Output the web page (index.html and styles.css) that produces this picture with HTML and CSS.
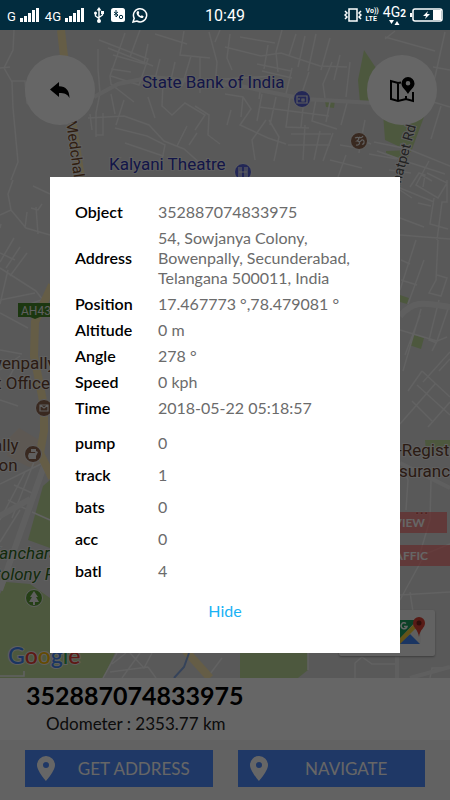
FILE: index.html
```html
<!DOCTYPE html>
<html lang="en">
<head>
<meta charset="UTF-8">
<meta name="viewport" content="width=device-width, initial-scale=1.0">
<title>Vehicle Tracking</title>
<link rel="stylesheet" href="styles.css">
</head>
<body>
<header class="status-bar">
    <div class="status-left">
        <span class="network">G</span>
        <svg class="signal" width="19" height="16" viewBox="0 0 19 16"><path d="M0 11h3v4H0zM4 9h3v6H4zM8 6h3v9H8zM12 3h3v12h-3zM16 1h3v14h-3z"/></svg>
        <span class="network">4G</span>
        <svg class="signal" width="19" height="16" viewBox="0 0 19 16"><path d="M0 11h3v4H0zM4 9h3v6H4zM8 6h3v9H8zM12 3h3v12h-3zM16 1h3v14h-3z"/></svg>
        <svg class="usb" width="10" height="16" viewBox="0 0 10 16"><path d="M5 0L2.500 3.500h5z"/><path d="M5 2v12M1.500 6v3L5 11.500M8.500 5v3L5 10.500" fill="none" stroke="#fff" stroke-width="1.400"/><circle cx="1.500" cy="6" r="1.500"/><path d="M7 4h3v3H7z"/><circle cx="5" cy="14" r="2"/></svg>
        <svg width="14" height="14" viewBox="0 0 14 14"><rect width="14" height="14" rx="2.500"/><path d="M5 2v7M3 4l4 3-2 2M7 4L3 7" fill="none" stroke="#022c3e" stroke-width="1"/><circle cx="10" cy="9" r="1.700" fill="none" stroke="#022c3e"/></svg>
        <svg class="whatsapp" width="16" height="16" viewBox="0 0 16 16"><path d="M1 15l1.200-3.700A6.600 6.600 0 1 1 4.800 14z" fill="none" stroke="#fff" stroke-width="1.500"/><path d="M5.300 4.200l1.200-.1.800 1.900-.7.900c.6 1.100 1.300 1.700 2.300 2.200l.9-.8 1.800.9c0 1.400-1.200 2-2.200 1.800C6.800 10.400 5 8.500 4.500 6.200c0-.9.300-1.600.8-2z"/></svg>
    </div>
    <time class="clock">10:49</time>
    <div class="status-right">
        <svg width="18" height="14" viewBox="0 0 18 14"><g fill="none" stroke="#fff" stroke-width="1.500"><rect x="5" y="1" width="8" height="12"/><path d="M1 3l2 2-2 2 2 2-2 2M17 3l-2 2 2 2-2 2 2 2"/></g></svg>
        <div class="volte"><span>Vo))</span><span>LTE</span></div>
        <div class="data">
            <span>4G<small>2</small></span>
            <svg width="11" height="5" viewBox="0 0 11 5"><path d="M0 0h5L2.500 4zM5.500 5h5L8 1z"/></svg>
        </div>
        <svg width="33" height="14" viewBox="0 0 33 14"><rect x="3" y="1" width="29" height="12" rx="2" fill="none" stroke="#fff" stroke-width="1.500"/><path d="M0 5h2v4H0zM23 2h8v10h-8zM18 3l-5 5h3l-1 3 5-5h-3z"/></svg>
    </div>
</header>

<main class="screen">
    <section class="map">
        <svg class="map-tiles" viewBox="0 30 450 648" preserveAspectRatio="xMidYMid slice">
            <rect y="30" width="450" height="648" fill="#dedede"/>

            <!-- parks -->
            <g fill="#c0dc9c">
                <path d="M378 71l49 17 4 10-20 54-26-12-3-40-22 3-2-23 6-30z"/>
                <path d="M325 101l5-2 5 1-1 8-8-1z"/>
                <path d="M386 151l25-1-5 12-20-9z"/>
                <path d="M400 295l9 3-2 6-7-2zM412 334l12 4-3 11-12-4z"/>
                <path d="M50 480l-7 6-15 54 22 8z"/>
                <path d="M0 594l6-12 24 2 20 14v55h65l-12 25H0z"/>
                <path d="M240 653h68v17l-10 8h-58z"/>
                <path d="M425 440h25v7h-12v6h-12z"/>
            </g>
            <path d="M7 440l12-12 25 15-5 22-10 2-22-11z" fill="#e8ddcf"/>

            <!-- streets -->
            <g fill="none" stroke="#f4f4f4" stroke-width="1.500">
                <path d="M14 30l-1 20-9 18 8 14 1 26 5 54-7 18M0 68l10-1M12 81h13l2 22 8 8"/>
                <path d="M99 40l31 12 18 7-9 26-28-9M125 33l-15 43 1 8 23 18M108 48l45 18M148 44l-4 20M113 55l32 9M111 69l20 3M98 49v20l2 24-4 20v24M96 135h7v-22M90 114l2 16M111 94l4 20"/>
                <path d="M140 30l-10 27M155 34l32 10M184 31l-4 24 30 3M160 59l-6 24M175 62l-5 22M191 56l-9 30M200 57v36M209 32l8 30-2 25M220 30l-5 12M163 83l-1 23 10 9 13-12 20 12-10 15M195 106l14 9-1 20 12 9M187 126l-10 20M197 133l-8 12"/>
                <path d="M88 118l36-2 25 9 15 16 20 8 17 15 24 6M115 128l32 8 18 9-2 10M125 143l38 13-6 10M124 100l-8 25M148 97l7 21M225 47l36 9 20-3 39 13 27 1M230 34l-3 24 5 12M240 37l35 6M282 30l-6 22 2 20M296 34l-7 22M305 36l-7 31M316 34l-8 37M330 38l-9 32M257 64l34 7M262 71l30 7M268 45l-4 24M225 79l49-3M262 79l-3 20M292 68l-6 26M309 72l-8 24M332 62l-9 22 2 14M340 55l-6 25M350 62l-4 35"/>
                <path d="M225 94l18 3 8 12-11 16 28 13 18 6M231 110l-4 15M243 97l-2 20M262 94l-5 27M276 97l-6 28M290 97l-4 30 23 1M304 99l-3 28M316 99l-4 22 25 8M330 102l-4 20M347 103l-6 22M259 107l70 9M266 120l-14 20 3 20M269 120l10 17-5 24M305 125l-2 35M320 131l-6 29M333 133l-10 28M291 134h40M288 145h42"/>
                <path d="M385 37l50 14M395 31l-10 8M445 32l-10 45-4 14M433 67l17 3M430 101l20 6M441 106l-10 33M374 142l34 7 42 17M377 151l34 12 34 11M365 120l-4 20 10 4M369 154l28 5M389 170l22 3M340 145l18 3M330 160l32 8M346 155l-8 22M361 137l-2 16"/>
                <path d="M429 161l-13 24 22 13 9-15-20-10M422 175l10 6M410 187l9-14 6 2-2 12M400 190l12 8M434 198l-4 26 18 5M434 202l-34-14M400 218l24 9M418 203l13 3M447 180v22h-5l-5 38M400 235l50 4M416 240l-16 50M438 240l-2 40-7 13 12 3 6-18-10-3M424 260l-16 44M401 260l9 4M401 280l16 5M439 300l-10 40 8 3M400 330l37 11 11-32M421 309l-18 62M447 337l-10 4-5 10M420 315l-15 40M422 371l28 26M422 371l-14 20M450 352l-27 30M417 385l33 30M439 371l11-12M400 424l35-40M412 401l20 20M450 402l-22 25"/>
                <path d="M13 180l-5 14 3 16-11 5M11 210l15 18 24 7M33 186l17 8M27 212l-2 16M36 207l2 27M31 208l7 2 4-6M0 228l1-4M14 238L0 262M20 247L6 268M0 268l36 23M27 253L10 276M15 260L0 253M36 291l16 21M8 270L0 304M35 293L0 300M24 306l26-9M0 313l28 15M0 350l22 4M17 362l-10 20M0 370l20-14M0 400l18 6"/>
                <path d="M0 484l45-22M25 472L0 520M34 462L12 518M14 485l18 8M8 500l18 9M20 510L0 542M50 520l-18-8"/>
                <path d="M404 470l4 10-2 30M431 480l-1 40-12 40M400 600l25-46 25-10M400 595l50-3M410 592l3 20-4 42M0 676h24v-5M103 678l14-25M112 664l14-11M110 672l38-5M130 653l14 15 8-15M122 678l18-25M148 667l8 11M207 678l15-20M355 678v-15l7-6 10 7h25M430 678l2-10h18M308 653v17"/>
            </g>
            <g fill="none" stroke="#eee" stroke-width="4">
                <path d="M94 97l24-13 34-7 88 9 64 13 70 4"/>
                <path d="M400 316c15-18 28-12 50-9" stroke-width="6"/>
                <path d="M44 466L0 590M0 516l30-17" stroke-width="6"/>
                <path d="M400 463l50 25M397 656v22M410 678l40-11"/>
            </g>
            <g fill="none" stroke="#fce8ae" stroke-width="8">
                <path d="M61 30l8 70 12 78M52 285l-17 37-1 34 10 50v25l-4 22 12 25"/>
                <path d="M185 650l25 28"/>
            </g>
            <path d="M174 678l10-11 5-14" fill="none" stroke="#86a7e0" stroke-width="2"/>

            <path d="M18 303h34v14H40l-5 2-5-2H18z" fill="#468a28"/>
            <text class="route" x="21" y="315">AH43</text>

            <!-- places -->
            <g class="label place">
                <text x="142" y="88">State Bank of India</text>
                <text x="109" y="170">Kalyani Theatre</text>
            </g>
            <g class="label poi">
                <text x="-31" y="369">Bowenpally</text>
                <text x="-33" y="389">Post Office</text>
                <text x="-68" y="451">Bowenpally</text>
                <text x="-36" y="471">Station</text>
                <text x="368" y="456">Sub-Registrar</text>
                <text x="385" y="477">Insurance</text>
                <text x="415" y="514">...</text>
            </g>
            <g class="label park">
                <text x="-11" y="559">Kanchara</text>
                <text x="-10" y="580">Colony Park</text>
            </g>
            <text class="label road" transform="translate(66 121) rotate(82)">Medchal Rd</text>
            <text class="label street" transform="translate(393 212) rotate(-75)">Hasmatpet Rd</text>

            <g stroke="#eee" stroke-width="1">
                <circle cx="302" cy="99" r="8.500" fill="#5763d6"/>
                <circle cx="243" cy="172" r="8.500" fill="#5763d6"/>
                <circle cx="359" cy="141" r="8.500" fill="#8f6650"/>
                <circle cx="44" cy="408" r="8.500" fill="#8f6650"/>
                <circle cx="33" cy="454" r="8.500" fill="#8f6650"/>
                <circle cx="34" cy="598" r="8.500" fill="#5c9e38"/>
            </g>
            <g fill="none" stroke="#eee" stroke-width="1.200">
                <path d="M297 96h10v7h-10zM299 98v2M302 99v2h2v-2zM239 167v10M247 167v10M241 167v10M245 167v10M239 172h8"/>
                <path d="M355 138c4-2 5 1 2 3 4 0 3 5-1 4M359 142c2 0 2-3 4-2s1 5-1 4M359 137c1 1 3 1 4-1"/>
                <path d="M40 405h8v6h-8zM40 405l4 3 4-3"/>
            </g>
            <path d="M34 591l-4 6h2l-3 5h4v3h2v-3h4l-3-5h2zM31 449h5v3h-5zM29 453h6l1-2 2 1-2 4v3h-7l-1-3z" fill="#eee"/>
            <text class="logo" x="8" y="664"><tspan fill="#4285f4">G</tspan><tspan fill="#ea4335">o</tspan><tspan fill="#fbbc05">o</tspan><tspan fill="#4285f4">g</tspan><tspan fill="#34a853">l</tspan><tspan fill="#ea4335">e</tspan></text>
        </svg>

        <button class="round-btn back" type="button" aria-label="Back">
            <svg width="20" height="16" viewBox="0 0 20 16"><path d="M0 7.500L9 0v4.300c7 0 10.500 4.500 10.500 11.700-2-3.800-5-5-10.500-5V15z"/></svg>
        </button>
        <button class="round-btn map-type" type="button" aria-label="Map type">
            <svg width="26" height="26" viewBox="0 0 26 26"><path d="M12 5.500L9 6 2 4v18l7 2 8-2 7 2v-9M9 6v18M17 19v3" fill="none" stroke="#000" stroke-width="2"/><path d="M19 0a6.500 6.500 0 0 0-6.500 6.500c0 4 4 6 6.500 10.500 2.500-4.500 6.500-6.500 6.500-10.500A6.500 6.500 0 0 0 19 0zm0 4a2.300 2.300 0 1 1 0 4.600A2.300 2.300 0 0 1 19 4z" fill-rule="evenodd"/></svg>
        </button>

        <div class="layers">
            <button class="layer-btn" type="button">STREET VIEW</button>
            <button class="layer-btn wide" type="button">TRAFFIC</button>
        </div>

        <div class="map-toolbar">
            <button type="button" aria-label="Directions"></button>
            <button type="button" aria-label="Open in Google Maps">
                <svg width="32" height="30" viewBox="0 0 32 30"><rect x="2" y="3" width="24" height="24" rx="2" fill="#eee"/><path d="M2 3h20L2 25z" fill="#1fa463"/><path d="M4 27l11-10 10 10z" fill="#4285f4"/><path d="M2 24L19 7l3 3L5 27H2z" fill="#fbd03b"/><path d="M11 6.500a3 3 0 1 0 1 3h-3" fill="none" stroke="#fff" stroke-width="1.500"/><path d="M24 0a6 6 0 0 0-6 6c0 5 5 6 6 14 1-8 6-9 6-14a6 6 0 0 0-6-6z" fill="#db4437"/><circle cx="24" cy="6" r="2.500" fill="#7b231c"/></svg>
            </button>
        </div>
    </section>

    <section class="vehicle">
        <h1>352887074833975</h1>
        <p>Odometer : 2353.77 km</p>
    </section>

    <div class="actions">
        <button class="action-btn" type="button">
            <svg width="18" height="25" viewBox="0 0 18 25"><path d="M9 0a9 9 0 0 0-9 9c0 6 9 16 9 16s9-10 9-16a9 9 0 0 0-9-9zm0 6a3 3 0 1 1 0 6 3 3 0 0 1 0-6z" fill-rule="evenodd"/></svg>
            <span>GET ADDRESS</span>
        </button>
        <button class="action-btn" type="button">
            <svg width="18" height="25" viewBox="0 0 18 25"><path d="M9 0a9 9 0 0 0-9 9c0 6 9 16 9 16s9-10 9-16a9 9 0 0 0-9-9zm0 6a3 3 0 1 1 0 6 3 3 0 0 1 0-6z" fill-rule="evenodd"/></svg>
            <span>NAVIGATE</span>
        </button>
    </div>

    <div class="overlay">
        <div class="dialog" role="dialog" aria-label="Object details">
            <table class="details">
                <tr><th scope="row">Object</th><td>352887074833975</td></tr>
                <tr><th scope="row">Address</th><td>54, Sowjanya Colony, Bowenpally, Secunderabad, Telangana 500011, India</td></tr>
                <tr><th scope="row">Position</th><td>17.467773 °,78.479081 °</td></tr>
                <tr><th scope="row">Altitude</th><td>0 m</td></tr>
                <tr><th scope="row">Angle</th><td>278 °</td></tr>
                <tr><th scope="row">Speed</th><td>0 kph</td></tr>
                <tr><th scope="row">Time</th><td>2018-05-22 05:18:57</td></tr>
            </table>
            <table class="details sensors">
                <tr><th scope="row">pump</th><td>0</td></tr>
                <tr><th scope="row">track</th><td>1</td></tr>
                <tr><th scope="row">bats</th><td>0</td></tr>
                <tr><th scope="row">acc</th><td>0</td></tr>
                <tr><th scope="row">batl</th><td>4</td></tr>
            </table>
            <button class="hide-btn" type="button">Hide</button>
        </div>
    </div>
</main>
</body>
</html>
```

FILE: styles.css
```css
* {
    box-sizing: border-box;
}

body {
    margin: 0;
    min-height: 100vh;
    display: flex;
    flex-direction: column;
    font-family: Lato, "Open Sans", sans-serif;
}

button {
    border: none;
    padding: 0;
    font-family: inherit;
    cursor: pointer;
}

/* status bar */
.status-bar {
    display: grid;
    grid-template-columns: 1fr auto 1fr;
    align-items: center;
    height: 30px;
    padding: 0 7px;
    background: #022c3e;
    color: #fff;
    font-family: Roboto, sans-serif;
}

.status-bar svg {
    fill: #fff;
}

.status-left,
.status-right {
    display: flex;
    align-items: center;
}

.status-right {
    justify-content: flex-end;
    gap: 4px;
}

.network {
    font-size: 13px;
    margin-right: 4px;
    padding-top: 2px;
}

.signal {
    margin-right: 6px;
}

.usb {
    margin: 0 7px 0 4px;
}

.whatsapp {
    margin-left: 7px;
}

.clock {
    font-size: 16px;
}

.volte {
    display: flex;
    flex-direction: column;
    font-size: 7px;
    font-weight: 700;
    line-height: 8px;
}

.data {
    display: flex;
    flex-direction: column;
    align-items: center;
    font-size: 14px;
    line-height: 13px;
}

.data small {
    font-size: 10px;
    font-weight: 700;
}

/* map */
.screen {
    position: relative;
    flex: 1;
    display: flex;
    flex-direction: column;
    overflow: hidden;
}

.map {
    position: relative;
    flex: 1;
    overflow: hidden;
}

.map-tiles {
    position: absolute;
    width: 100%;
    height: 100%;
}

.label {
    font-family: Roboto, sans-serif;
    font-size: 17px;
    stroke: #f0f0f0;
    stroke-width: 2px;
    paint-order: stroke;
}

.place {
    fill: #3038b4;
}

.poi {
    fill: #6b4530;
}

.park {
    fill: #2f6b1c;
    font-style: italic;
}

.road {
    fill: #784b28;
    font-size: 15px;
}

.street {
    fill: #555;
    font-size: 14px;
}

.route {
    fill: #eee;
    font-family: Roboto, sans-serif;
    font-size: 12px;
}

.logo {
    font-family: Lato, sans-serif;
    font-size: 23px;
    font-weight: 500;
    stroke: #eee;
    stroke-width: 2px;
    paint-order: stroke;
}

.round-btn {
    position: absolute;
    top: 25px;
    display: flex;
    align-items: center;
    justify-content: center;
    width: 70px;
    height: 70px;
    border-radius: 50%;
    background: #fff;
}

.back {
    left: 25px;
}

.map-type {
    right: 13px;
}

.layers {
    position: absolute;
    right: 0;
    bottom: 112px;
    display: flex;
    flex-direction: column;
    align-items: flex-end;
    gap: 12px;
}

.layer-btn {
    height: 21px;
    margin-right: 3px;
    padding: 0 22px;
    background: rgba(255, 90, 90, 0.6);
    color: #fff;
    font-size: 12px;
    font-weight: 700;
}

.layer-btn.wide {
    margin-right: 0;
}

.map-toolbar {
    position: absolute;
    right: 15px;
    bottom: 22px;
    display: flex;
    background: #f4f4f4;
    border-radius: 2px;
    box-shadow: 0 1px 2px #999;
}

.map-toolbar button {
    width: 48px;
    height: 46px;
    background: none;
}

/* vehicle info */
.vehicle {
    padding: 0 26px 4px;
    background: #fff;
}

.vehicle h1 {
    margin: 0;
    font-size: 25px;
    line-height: 34px;
    font-weight: 700;
}

.vehicle p {
    margin: 0;
    padding-left: 20px;
    font-size: 17px;
    line-height: 24px;
    color: #222;
}

.actions {
    display: flex;
    gap: 25px;
    padding: 10px 25px 13px;
    background: #f6f6f6;
}

.action-btn {
    flex: 1;
    display: flex;
    align-items: center;
    height: 37px;
    padding: 0 12px;
    background: #4e8cff;
    color: #fff;
    font-size: 17px;
}

.action-btn svg {
    fill: #fff;
}

.action-btn span {
    flex: 1;
    padding-left: 12px;
}

/* details dialog */
.overlay {
    position: absolute;
    inset: 0;
    display: flex;
    align-items: center;
    padding: 0 50px;
    background: rgba(0, 0, 0, 0.6);
}

.dialog {
    flex: 1;
    display: flex;
    flex-direction: column;
    padding: 22px 25px 32px;
    background: #fff;
}

.details {
    width: 100%;
    table-layout: fixed;
    border-collapse: collapse;
    font-size: 16px;
    line-height: 20px;
}

.details th {
    width: 83px;
    padding: 3px 0;
    text-align: left;
    font-weight: 600;
    color: #000;
}

.details td {
    padding: 3px 0;
    color: #6b6b6b;
}

.sensors {
    margin-top: 6px;
}

.sensors th,
.sensors td {
    padding: 6px 0;
}

.hide-btn {
    align-self: center;
    margin-top: 14px;
    background: none;
    color: #1ab2f5;
    font-size: 16px;
    line-height: 20px;
}
```
